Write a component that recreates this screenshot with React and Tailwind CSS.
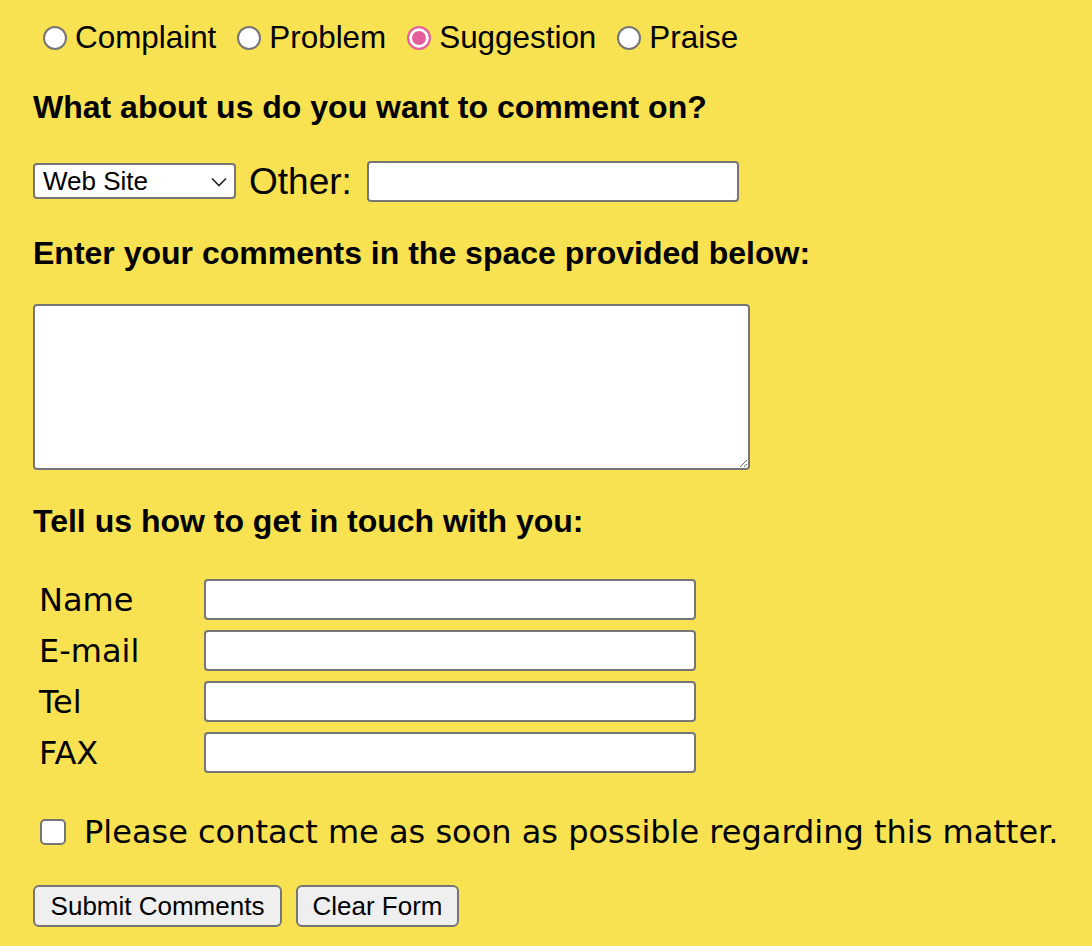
export default function App() {
    const radios = ['Complaint', 'Problem', 'Suggestion', 'Praise']
    const contacts = ['Name', 'E-mail', 'Tel', 'FAX']

    return (
        <div className="min-h-[946px] w-full bg-[#f8e252] px-[33px] pt-[18px] text-black font-['Liberation_Sans',Arial,sans-serif]">
            <div className="flex h-[40px] items-center gap-[21px] pl-[10px]">
                {radios.map((r) => (
                    <label key={r} className="flex items-center gap-[8px] text-[31.4px] leading-none">
                        <input
                            type="radio"
                            name="kind"
                            defaultChecked={r === 'Suggestion'}
                            className="m-0 h-[24px] w-[24px] appearance-none rounded-full border-2 border-[#767676] bg-white checked:border-[#e35f9c] checked:bg-[#e35f9c] checked:shadow-[inset_0_0_0_3px_white]"
                        />
                        {r}
                    </label>
                ))}
            </div>

            <h3 className="mt-[29px] flex h-[40px] items-center text-[32px] font-bold leading-none">
                What about us do you want to comment on?
            </h3>

            <div className="mt-[33px] flex h-[42px] items-center">
                <div className="relative">
                    <select className="m-0 h-[36px] w-[203px] appearance-none rounded-[4px] border-2 border-[#767676] bg-white pl-[8px] text-[26px] leading-none outline-none">
                        <option>Web Site</option>
                        <option>Company</option>
                        <option>Products</option>
                        <option>Store</option>
                        <option>Employee</option>
                    </select>
                    <svg
                        className="pointer-events-none absolute right-[9px] top-[14px]"
                        width="16"
                        height="10"
                        viewBox="0 0 16 10"
                        fill="none"
                    >
                        <path d="M1 1.5L8 8.5L15 1.5" stroke="#222" strokeWidth="1.6" />
                    </svg>
                </div>
                <span className="ml-[13px] text-[37px] leading-none">Other:</span>
                <input
                    type="text"
                    className="ml-[15px] h-[41px] w-[372px] rounded-[4px] border-2 border-[#767676] bg-white outline-none"
                />
            </div>

            <h3 className="mt-[31px] flex h-[40px] items-center text-[32px] font-bold leading-none">
                Enter your comments in the space provided below:
            </h3>

            <textarea className="mt-[31px] block h-[166px] w-[717px] rounded-[4px] border-2 border-[#767676] bg-white outline-none" />

            <h3 className="mt-[31px] flex h-[40px] items-center text-[32px] font-bold leading-none">
                Tell us how to get in touch with you:
            </h3>

            <div className="mt-[38px] flex flex-col gap-[10px]">
                {contacts.map((c) => (
                    <div key={c} className="flex h-[41px] items-center">
                        <span className="w-[171px] pl-[6px] text-[32px] leading-none font-['DejaVu_Sans',Verdana,sans-serif]">
                            {c}
                        </span>
                        <input
                            type="text"
                            className="h-[41px] w-[492px] rounded-[4px] border-2 border-[#767676] bg-white outline-none"
                        />
                    </div>
                ))}
            </div>

            <label className="mt-[41px] flex h-[36px] items-center pl-[7px] font-['DejaVu_Sans',Verdana,sans-serif]">
                <input
                    type="checkbox"
                    className="m-0 h-[26px] w-[26px] appearance-none rounded-[5px] border-2 border-[#767676] bg-white"
                />
                <span className="ml-[18px] text-[32px] leading-none">
                    Please contact me as soon as possible regarding this matter.
                </span>
            </label>

            <div className="mt-[35px] flex gap-[14px]">
                <button className="h-[42px] w-[249px] rounded-[6px] border-2 border-[#767676] bg-[#efefef] text-[26px] leading-none">
                    Submit Comments
                </button>
                <button className="h-[42px] w-[163px] rounded-[6px] border-2 border-[#767676] bg-[#efefef] text-[26px] leading-none">
                    Clear Form
                </button>
            </div>
        </div>
    )
}
